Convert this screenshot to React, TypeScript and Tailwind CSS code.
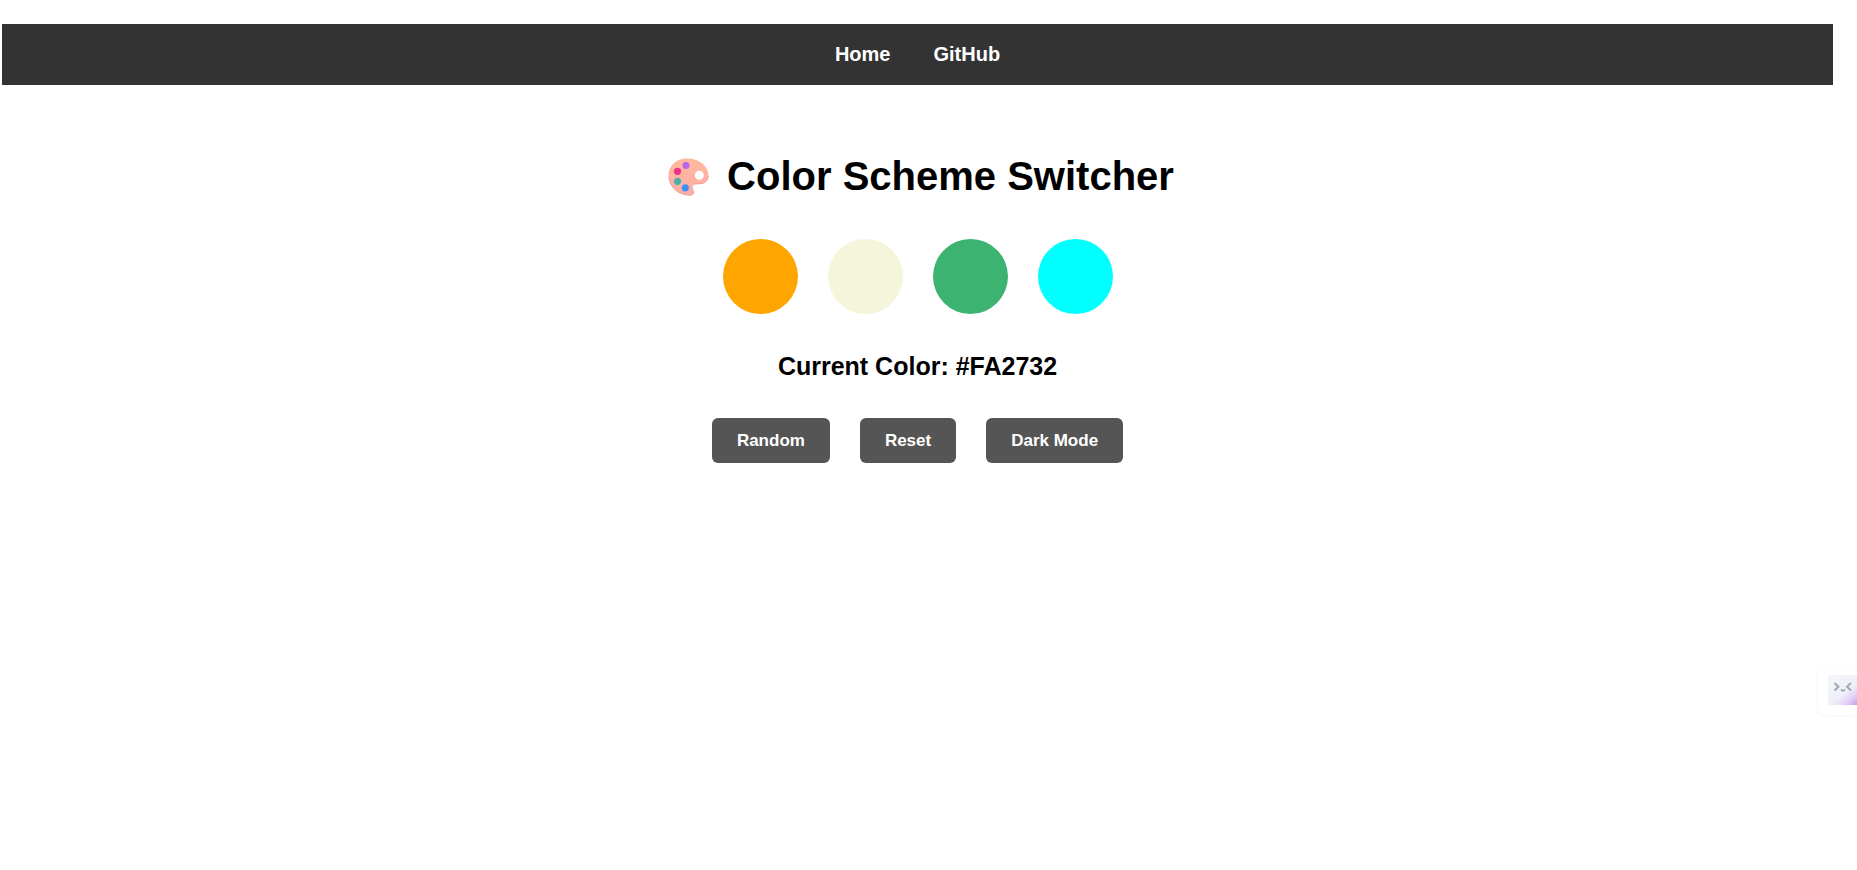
const swatches = [
  { name: 'Orange', fill: 'bg-[#ffa500]' },
  { name: 'Beige', fill: 'bg-[#f5f5dc]' },
  { name: 'Green', fill: 'bg-[#3cb371]' },
  { name: 'Cyan', fill: 'bg-[#00ffff]' },
];

const actions = ['Random', 'Reset', 'Dark Mode'];

function PaletteIcon() {
  return (
    <svg className="h-10 w-12 shrink-0" viewBox="-7 -2 48 40" aria-hidden="true">
      <defs>
        <linearGradient id="board" x1="0" y1="0" x2="0" y2="1">
          <stop offset="0" stopColor="#fdb99c" />
          <stop offset="0.5" stopColor="#ffb3a3" />
          <stop offset="1" stopColor="#fbaea6" />
        </linearGradient>
        <linearGradient id="violet" x1="0" y1="0" x2="1" y2="1">
          <stop offset="0" stopColor="#a661e8" />
          <stop offset="1" stopColor="#cc66ee" />
        </linearGradient>
        <linearGradient id="teal" x1="0" y1="0" x2="1" y2="1">
          <stop offset="0" stopColor="#6aa9a4" />
          <stop offset="1" stopColor="#2bb5b5" />
        </linearGradient>
      </defs>
      <path
        d="M19 0.5C8 0.5 0.5 8 0.5 17C0.5 28 9.5 37.5 21.5 37.5C25 37.5 26.6 36 26 33.5C25.5 31 24 29.5 25 27.5C26 26 28 26.2 31 26.2C37 26.2 40.5 23 40.5 18C40.5 8 31 0.5 19 0.5ZM31.3 12.8A4.5 4.5 0 1 1 31.3 21.8A4.5 4.5 0 1 1 31.3 12.8Z"
        fill="url(#board)"
        fillRule="evenodd"
      />
      <path d="M0.9 19C1.6 29 10.5 37 21.5 37C25 37 26.2 35.5 25.5 33.2" fill="none" stroke="#f2a39d" />
      <path d="M25 26.6C27 25.6 28 25.7 31 25.7C36.6 25.7 40 22.6 40 18" fill="none" stroke="#f2a197" />
      <circle cx="18" cy="7.5" r="3.5" fill="url(#violet)" />
      <circle cx="9.5" cy="13.3" r="3.6" fill="#ee2f86" />
      <circle cx="9.5" cy="23.3" r="3.6" fill="url(#teal)" />
      <circle cx="17.3" cy="29.8" r="3.6" fill="#3f90f2" />
    </svg>
  );
}

function AssistantTab() {
  return (
    <button
      type="button"
      aria-label="Open assistant"
      className="fixed top-[665px] right-0 rounded-l-lg bg-white py-[10px] pl-[10px] shadow-[0_1px_4px_rgba(0,0,0,0.05)]"
    >
      <svg className="block h-[30px] w-[29px]" viewBox="0 0 29 30" aria-hidden="true">
        <defs>
          <linearGradient id="face" x1="0.25" y1="0.1" x2="1" y2="1">
            <stop offset="0" stopColor="#f1f5f9" />
            <stop offset="0.5" stopColor="#f0effa" />
            <stop offset="0.75" stopColor="#e2d3f5" />
            <stop offset="1" stopColor="#c79cea" />
          </linearGradient>
        </defs>
        <path d="M2 0H29V30H2Q0 30 0 28V2Q0 0 2 0Z" fill="url(#face)" />
        <path
          d="M6.5 8L10.5 11.7L6.5 15.5M23 8L19 11.7L23 15.5M13 14.5Q15 17 17 14.5"
          fill="none"
          stroke="#a0a5aa"
          strokeWidth="1.9"
        />
      </svg>
    </button>
  );
}

export default function App() {
  return (
    <div className="min-h-screen bg-white pt-6 pr-6 pl-0.5 font-['Liberation_Sans',Arial,sans-serif] text-black">
      <nav className="flex justify-center gap-[43px] bg-[#333333] py-[19px] text-xl leading-[23px] font-bold text-white">
        <a href="#home">Home</a>
        <a href="#github">GitHub</a>
      </nav>
      <main className="flex flex-col items-center pt-[68px]">
        <h1 className="flex items-center gap-[18px] text-[40px] leading-[46px] font-bold">
          <PaletteIcon />
          Color Scheme Switcher
        </h1>
        <div className="mt-10 flex gap-[30px]">
          {swatches.map((swatch) => (
            <button
              key={swatch.name}
              type="button"
              aria-label={swatch.name}
              className={`size-[75px] rounded-full ${swatch.fill}`}
            />
          ))}
        </div>
        <h2 className="mt-[38px] text-[25px] leading-[29px] font-bold">Current Color: #FA2732</h2>
        <div className="mt-[37px] flex gap-[30px]">
          {actions.map((action) => (
            <button
              key={action}
              type="button"
              className="rounded-md bg-[#555555] px-[25px] py-[13px] text-[17px] leading-[19px] font-bold text-white"
            >
              {action}
            </button>
          ))}
        </div>
      </main>
      <AssistantTab />
    </div>
  );
}
